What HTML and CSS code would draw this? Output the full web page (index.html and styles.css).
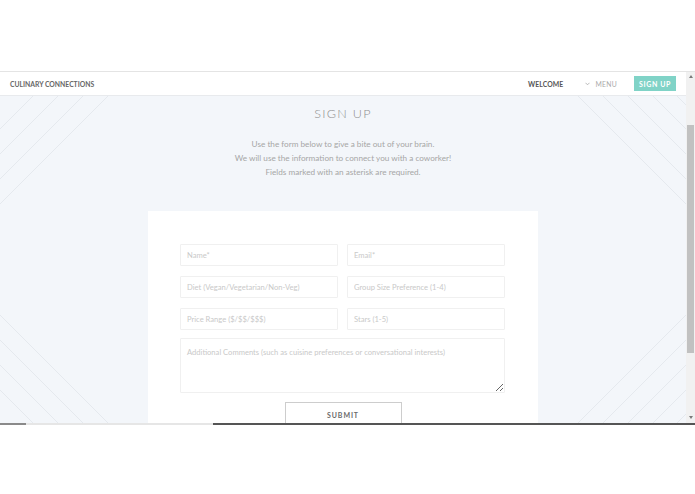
FILE: index.html
```html
<!DOCTYPE html>
<html>
<head>
<meta charset="utf-8">
<link rel="stylesheet" href="styles.css">
</head>
<body>
<div class="top-space"></div>
<div class="frame">
  <div class="viewport">
    <header class="nav">
      <div class="brand">CULINARY CONNECTIONS</div>
      <nav class="links">
        <span class="welcome">WELCOME</span>
        <span class="menu"><svg class="chev" width="5" height="4" viewBox="0 0 5 4"><path d="M0.5 0.8 L2.5 2.8 L4.5 0.8" fill="none" stroke="#aaa" stroke-width="0.8"/></svg>MENU</span>
        <span class="signup-btn">SIGN UP</span>
      </nav>
    </header>
    <main class="content">
      <svg class="bg-lines" width="686" height="327" viewBox="0 0 686 327">
        <g stroke="#e5e9ee" stroke-width="1" fill="none">
          <path d="M33 0 L0 33 M58 0 L0 58 M83 0 L0 83 M108 0 L0 108"/>
          <path d="M0 294 L33 327 M0 269 L58 327 M0 244 L83 327 M0 219 L108 327"/>
          <path d="M653 0 L686 33 M628 0 L686 58 M603 0 L686 83 M578 0 L686 108 M677 0 L686 9"/>
          <path d="M686 294 L653 327 M686 269 L628 327 M686 244 L603 327 M686 219 L578 327 M686 318 L677 327"/>
        </g>
      </svg>
      <h1 class="title">SIGN UP</h1>
      <p class="intro">Use the form below to give a bite out of your brain.<br>We will use the information to connect you with a coworker!<br>Fields marked with an asterisk are required.</p>
      <form class="card">
        <div class="grid">
          <input class="field" placeholder="Name*">
          <input class="field" placeholder="Email*">
          <input class="field" placeholder="Diet (Vegan/Vegetarian/Non-Veg)">
          <input class="field" placeholder="Group Size Preference (1-4)">
          <input class="field" placeholder="Price Range ($/$$/$$$)">
          <input class="field" placeholder="Stars (1-5)">
        </div>
        <textarea class="comments" placeholder="Additional Comments (such as cuisine preferences or conversational interests)"></textarea>
        <div class="actions"><button type="button" class="submit">SUBMIT</button></div>
      </form>
    </main>
  </div>
  <div class="scrollbar">
    <div class="arrow up"></div>
    <div class="thumb"></div>
    <div class="arrow down"></div>
  </div>
</div>
<div class="progress">
  <div class="seg seg1"></div>
  <div class="seg seg2"></div>
  <div class="seg seg3"></div>
</div>
</body>
</html>
```

FILE: styles.css
```css
* { box-sizing: border-box; }
html, body { margin: 0; padding: 0; background: #fff; }
body { font-family: Lato, "Open Sans", Arial, sans-serif; width: 695px; height: 494px; overflow: hidden; }

.top-space { height: 72px; border-bottom: 1px solid #e4e4e4; }

.frame { height: 351px; display: flex; }
.viewport { flex: 1; display: flex; flex-direction: column; overflow: hidden; background: #f3f6fa; }

.nav {
  height: 24px; flex: none; background: #fff; border-bottom: 1px solid #e8eaed;
  display: flex; align-items: center; justify-content: space-between; padding: 0 10px 0 10px;
}
.brand { font-size: 6.8px; font-weight: 700; color: #666; letter-spacing: 0; }
.links { display: flex; align-items: center; }
.welcome { font-size: 6.8px; font-weight: 700; color: #555; letter-spacing: 0.1px; margin-right: 22px; }
.menu { font-size: 6.8px; font-weight: 400; color: #aaa; letter-spacing: 0.3px; margin-right: 17px; display: flex; align-items: center; }
.chev { margin-right: 5px; }
.signup-btn {
  background: #80d3c7; color: #fff; font-size: 7px; font-weight: 700; letter-spacing: 0.6px;
  width: 42px; height: 15px; display: flex; align-items: center; justify-content: center;
}

.content { position: relative; flex: 1; display: flex; flex-direction: column; align-items: center; }
.bg-lines { position: absolute; left: 0; top: 0; }

.title {
  position: relative; margin: 10px 0 0; font-size: 12.6px; line-height: 16px; font-weight: 300;
  color: #8e8e8e; letter-spacing: 1.3px;
}
.intro {
  position: relative; margin: 15px 0 0; font-size: 8.2px; line-height: 14px; color: #a6a6a6;
  text-align: center; font-weight: 400;
}

.card {
  position: relative; margin-top: 32px; width: 390px; background: #fff; padding: 33px 32px 0;
  flex: none; height: 240px;
}
.grid { display: grid; grid-template-columns: 158px 158px; column-gap: 9px; row-gap: 10px; }
.field, .comments {
  font-family: Lato, "Open Sans", Arial, sans-serif; font-size: 7.6px; color: #555;
  border: 1px solid #f0f0f0; border-radius: 1px; background: #fff; padding: 0 6px; outline: none;
}
.field { height: 22px; }
.field::placeholder, .comments::placeholder { color: #c9c9c9; }
.comments { display: block; margin-top: 8px; width: 325px; height: 55px; resize: vertical; padding: 8px 6px; }
.actions { display: flex; justify-content: center; margin-top: 9px; }
.submit {
  width: 117px; height: 25px; background: #fff; border: 1px solid #cdcdcd; font-family: Lato, Arial, sans-serif;
  font-size: 7px; font-weight: 700; letter-spacing: 0.9px; color: #6a6a6a; padding: 0;
}

.scrollbar { width: 9px; flex: none; background: #f1f1f1; position: relative; display: flex; flex-direction: column; align-items: center; }
.arrow { width: 0; height: 0; border-left: 2.5px solid transparent; border-right: 2.5px solid transparent; }
.arrow.up { border-bottom: 3px solid #7a7a7a; margin-top: 3px; }
.thumb { width: 7px; height: 228px; background: #c1c1c1; margin-top: 47px; }
.arrow.down { border-top: 3px solid #7a7a7a; margin-top: 63px; }

.progress { display: flex; height: 2px; }
.seg1 { width: 26px; background: #8a8a8a; }
.seg2 { width: 187px; background: #e6e6e6; }
.seg3 { flex: 1; background: #555; }
```
